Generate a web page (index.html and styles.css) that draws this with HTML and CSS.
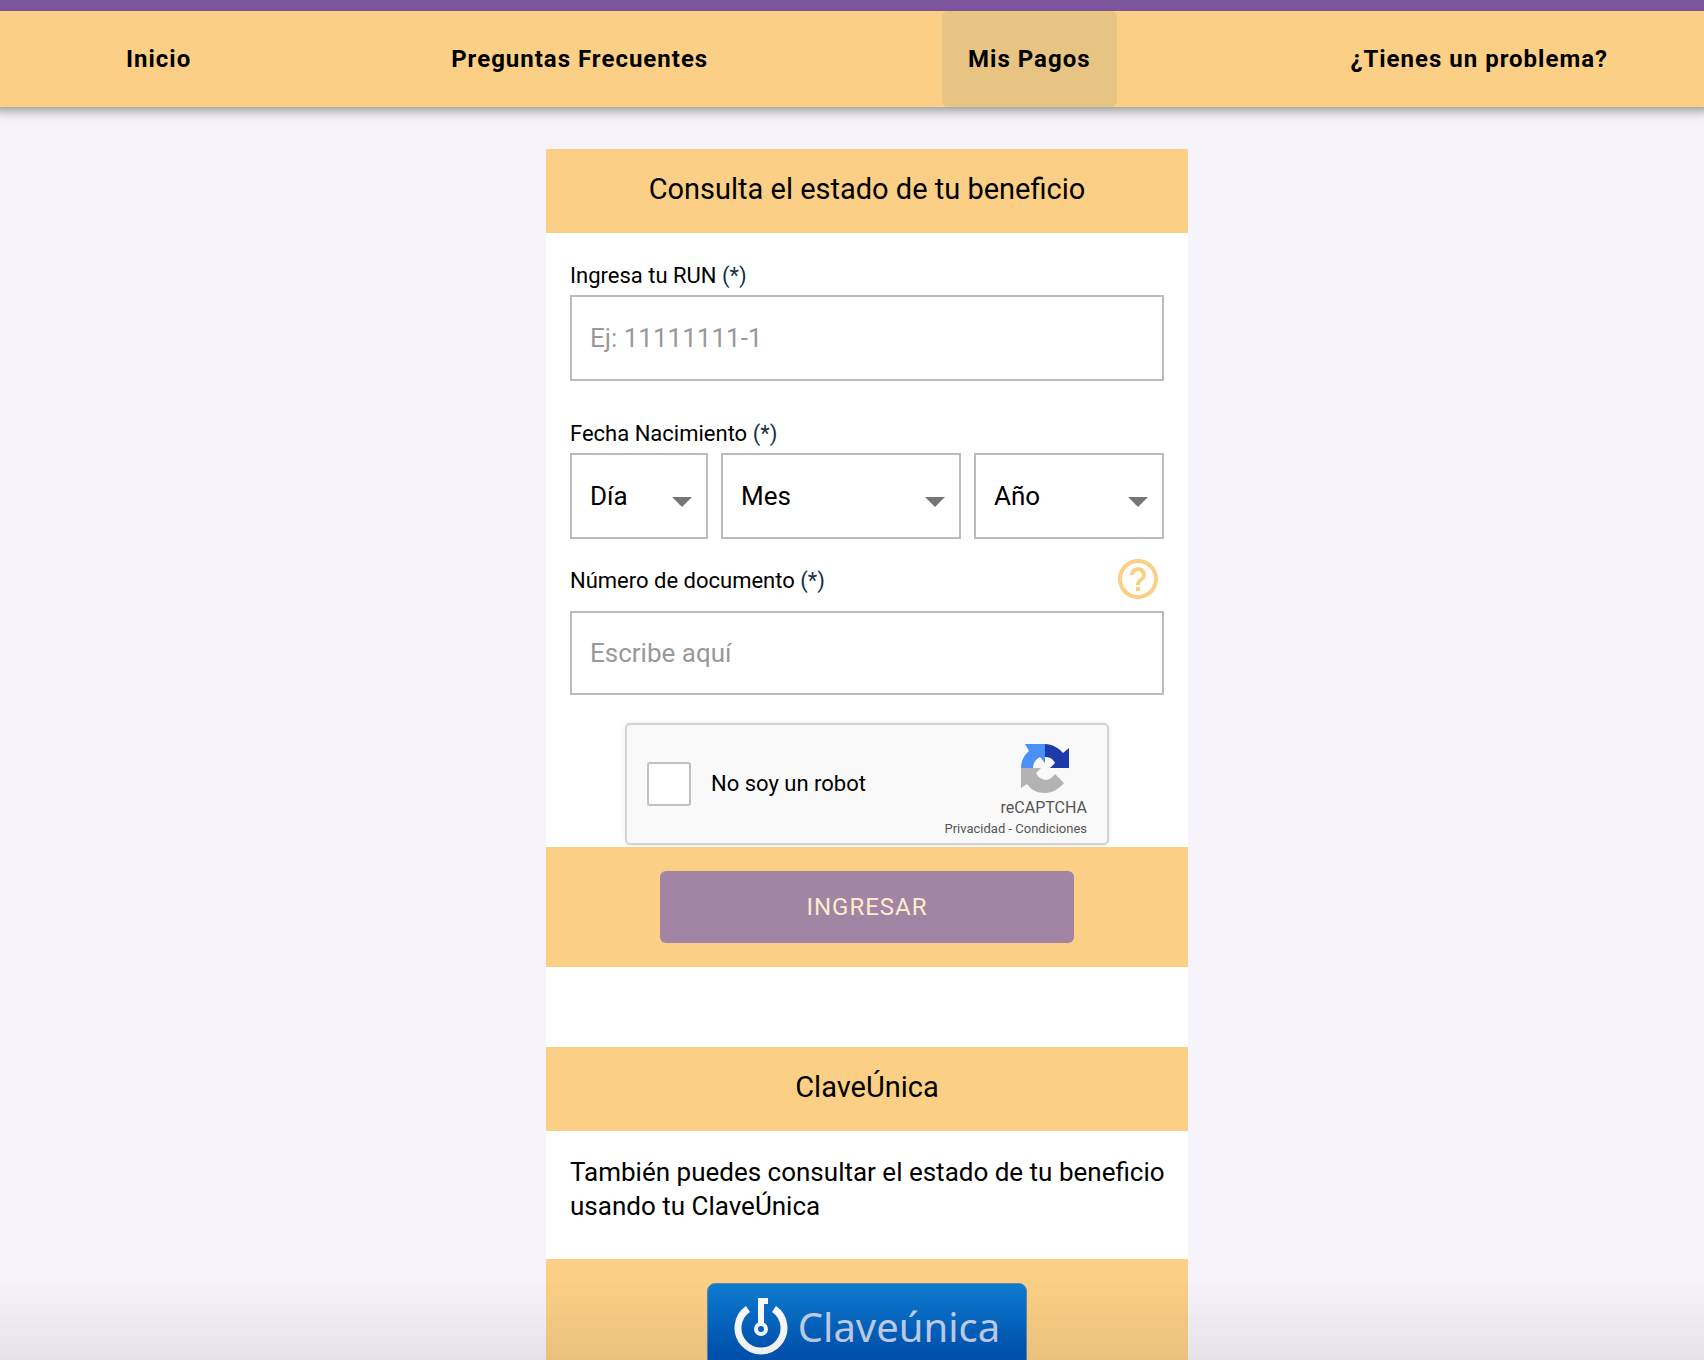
FILE: index.html
```html
<!DOCTYPE html>
<html lang="es">
<head>
    <meta charset="UTF-8">
    <meta name="viewport" content="width=device-width, initial-scale=1.0">
    <title>Mis Pagos</title>
    <link rel="stylesheet" href="styles.css">
</head>
<body>
    <header class="top">
        <nav class="menu">
            <a href="#">Inicio</a>
            <a href="#">Preguntas Frecuentes</a>
            <a href="#" class="active">Mis Pagos</a>
            <a href="#">¿Tienes un problema?</a>
        </nav>
    </header>

    <main class="content">
        <!-- Consulta con RUN -->
        <form class="card">
            <h2 class="card-title">Consulta el estado de tu beneficio</h2>
            <div class="card-body">
                <div class="field">
                    <label for="run">Ingresa tu RUN <span class="req">(*)</span></label>
                    <input type="text" id="run" placeholder="Ej: 11111111-1">
                </div>

                <fieldset class="field">
                    <legend>Fecha Nacimiento <span class="req">(*)</span></legend>
                    <div class="date-row">
                        <div class="select-box">
                            <select id="dia" aria-label="Día"><option>Día</option></select>
                        </div>
                        <div class="select-box">
                            <select id="mes" aria-label="Mes"><option>Mes</option></select>
                        </div>
                        <div class="select-box">
                            <select id="anio" aria-label="Año"><option>Año</option></select>
                        </div>
                    </div>
                </fieldset>

                <div class="field field-doc">
                    <div class="label-row">
                        <label for="documento">Número de documento <span class="req">(*)</span></label>
                        <button type="button" class="help" aria-label="Ayuda">
                            <svg viewBox="2 2 20 20" width="40" height="40" fill="#fbd086">
                                <path d="M11 18h2v-2h-2v2zm1-16C6.480 2 2 6.480 2 12s4.480 10 10 10 10-4.480 10-10S17.520 2 12 2zm0 18c-4.410 0-8-3.590-8-8s3.590-8 8-8 8 3.590 8 8-3.590 8-8 8zm0-14c-2.210 0-4 1.790-4 4h2c0-1.100.9-2 2-2s2 .9 2 2c0 2-3 1.750-3 5h2c0-2.250 3-2.500 3-5 0-2.210-1.790-4-4-4z"/>
                            </svg>
                        </button>
                    </div>
                    <input type="text" id="documento" placeholder="Escribe aquí">
                </div>

                <div class="captcha">
                    <input type="checkbox" id="robot">
                    <label for="robot">No soy un robot</label>
                    <div class="captcha-brand">
                        <svg viewBox="0 0 48 49" width="48" height="49">
                            <path fill="#4a90f5" d="M24 0v19l-5-6c-4 2-7 6-7 11H0C0 17 3 11 8 7L4 0z"/>
                            <path fill="#1c3aa9" d="M24 0c7 0 14 4 18 9l6-5v20H29l5-5c-2-4-5-6-10-6z"/>
                            <path fill="#b3b3b3" d="M0 24h20l-5 5c2 4 5 6 9 7 4 0 7-2 10-6l9 9c-5 6-12 10-19 10-8 0-14-3-18-9l-6 4z"/>
                        </svg>
                        <span class="captcha-name">reCAPTCHA</span>
                        <span class="captcha-links"><a href="#">Privacidad</a> - <a href="#">Condiciones</a></span>
                    </div>
                </div>
            </div>
            <div class="card-footer">
                <button type="submit" class="submit-btn" disabled>INGRESAR</button>
            </div>
        </form>

        <!-- Consulta con ClaveÚnica -->
        <section class="card">
            <h2 class="card-title">ClaveÚnica</h2>
            <p class="card-text">También puedes consultar el estado de tu beneficio usando tu ClaveÚnica</p>
            <div class="card-footer">
                <button type="button" class="clave-btn">
                    <svg viewBox="0 0 54 58" width="54" height="58" fill="none" stroke="#fff">
                        <path stroke-width="7" d="M14 12A23 23 0 1 0 40 12"/>
                        <circle cx="27" cy="32" r="5" stroke-width="4"/>
                        <path stroke-width="6" d="M27 27V4h7"/>
                    </svg>
                    Claveúnica
                </button>
            </div>
        </section>
    </main>
    <div class="bottom-fade"></div>
</body>
</html>
```
FILE: styles.css
```css
* {
    box-sizing: border-box;
}
body {
    margin: 0;
    min-height: 100vh;
    font-family: Roboto, "Liberation Sans", sans-serif;
    background-color: #f6f4fa;
    color: #000;
    overflow: hidden;
}
.top {
    border-top: 11px solid #7b559c;
    background-color: #fbd086;
    box-shadow: 0 -6px 12px 8px rgba(0,0,0,0.5);
}
.menu {
    display: flex;
    justify-content: space-between;
    padding: 0 70px 0 100px;
}
.menu a {
    padding: 0 26px;
    line-height: 96px;
    font-size: 24px;
    font-weight: 700;
    letter-spacing: 1px;
    color: #000;
    text-decoration: none;
    border-radius: 6px;
}
.menu a.active {
    background-color: #e7c482;
}
.content {
    padding: 42px 0 0 30px;
}
.card {
    max-width: 642px;
    margin: 0 auto;
    background-color: #fff;
}
form.card {
    padding-bottom: 80px;
}
.card-title {
    margin: 0;
    background-color: #fbd086;
    text-align: center;
    font-size: 29px;
    font-weight: 400;
    line-height: 80px;
    padding-bottom: 4px;
}
.card-body {
    padding: 28px 24px 2px;
}
.field {
    border: 0;
    margin: 0 0 38px;
    padding: 0;
}
label, legend {
    display: block;
    padding: 0 0 4px;
    font-size: 22px;
    line-height: 30px;
}
.req {
    color: #12304f;
}
input[type="text"], select {
    display: block;
    width: 100%;
    height: 86px;
    padding: 0 18px;
    border: 2px solid #bbb;
    border-radius: 0;
    background-color: #fff;
    font-family: inherit;
    font-size: 26px;
    color: #000;
}
input::placeholder {
    color: #999;
}
.date-row {
    display: grid;
    grid-template-columns: 138fr 240fr 190fr;
    gap: 13px;
}
.select-box {
    position: relative;
}
.select-box select {
    appearance: none;
}
.select-box::after {
    content: "";
    position: absolute;
    right: 16px;
    top: 44px;
    border: 10px solid transparent;
    border-top-color: #757575;
    pointer-events: none;
}
fieldset.field {
    margin-bottom: 20px;
}
.field-doc {
    margin-bottom: 28px;
}
.field-doc input[type="text"] {
    height: 84px;
}
.label-row {
    display: flex;
    justify-content: space-between;
    align-items: flex-start;
    padding: 0 6px 4px 0;
}
.label-row label {
    line-height: 44px;
}
.help {
    padding: 0;
    border: 0;
    background: none;
    cursor: pointer;
}
.help svg {
    display: block;
}
.captcha {
    display: flex;
    align-items: center;
    gap: 20px;
    max-width: 484px;
    height: 122px;
    margin: 0 auto;
    padding: 0 20px;
    border: 2px solid #d3d3d3;
    border-radius: 5px;
    background-color: #f9f9f9;
    box-shadow: 0 0 4px rgba(0,0,0,0.1);
}
.captcha input {
    appearance: none;
    width: 44px;
    height: 44px;
    margin: 0;
    border: 2px solid #c1c1c1;
    border-radius: 3px;
    background-color: #fff;
}
.captcha label {
    padding: 0;
}
.captcha-brand {
    display: flex;
    flex-direction: column;
    align-items: flex-end;
    margin-left: auto;
    padding-top: 10px;
    color: #555;
}
.captcha-brand svg {
    margin-right: 18px;
}
.captcha-name {
    font-size: 16px;
    line-height: 30px;
}
.captcha-links {
    font-size: 13px;
    line-height: 12px;
}
.captcha-links a {
    color: inherit;
    text-decoration: none;
}
.card-footer {
    padding: 24px;
    background-color: #fbd086;
    text-align: center;
}
.submit-btn {
    width: 414px;
    max-width: 100%;
    height: 72px;
    border: 0;
    border-radius: 6px;
    background-color: #a285a4;
    color: #fdeccb;
    font-family: inherit;
    font-size: 24px;
    letter-spacing: 1px;
}
.card-text {
    margin: 0;
    padding: 24px 16px 36px 24px;
    font-size: 26px;
    line-height: 34px;
}
.clave-btn {
    display: inline-flex;
    align-items: center;
    justify-content: center;
    gap: 10px;
    width: 320px;
    max-width: 100%;
    height: 86px;
    border: 1px solid #5b87b0;
    border-radius: 8px;
    background: linear-gradient(#0f7dd1, #0057b8 80%);
    color: #c3d2ee;
    font-family: "Noto Sans", sans-serif;
    font-size: 40px;
    cursor: pointer;
}
/* sombra al pie de la ventana */
.bottom-fade {
    position: fixed;
    left: 0;
    right: 0;
    bottom: 0;
    height: 80px;
    background: linear-gradient(transparent, rgba(0,0,0,0.07));
    pointer-events: none;
}
```
